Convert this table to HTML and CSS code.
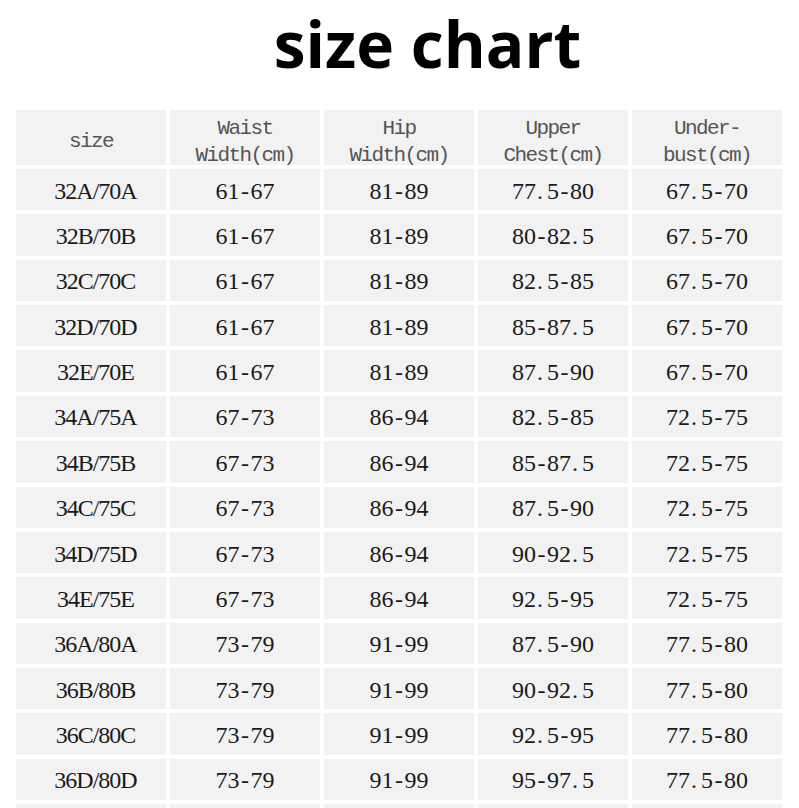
FILE: index.html
```html
<!DOCTYPE html>
<html>
<head>
<meta charset="utf-8">
<link rel="stylesheet" href="styles.css">
</head>
<body>
<div class="page">
  <h1 class="title">size chart</h1>
  <div class="chart">
    <div class="cell head">size</div>
    <div class="cell head">Waist<br>Width(cm)</div>
    <div class="cell head">Hip<br>Width(cm)</div>
    <div class="cell head">Upper<br>Chest(cm)</div>
    <div class="cell head">Under-<br>bust(cm)</div>

    <div class="cell size">32A/70A</div><div class="cell">61<span class="dash">-</span>67</div><div class="cell">81<span class="dash">-</span>89</div><div class="cell">77<span class="dot">.</span>5<span class="dash">-</span>80</div><div class="cell">67<span class="dot">.</span>5<span class="dash">-</span>70</div>
    <div class="cell size">32B/70B</div><div class="cell">61<span class="dash">-</span>67</div><div class="cell">81<span class="dash">-</span>89</div><div class="cell">80<span class="dash">-</span>82<span class="dot">.</span>5</div><div class="cell">67<span class="dot">.</span>5<span class="dash">-</span>70</div>
    <div class="cell size">32C/70C</div><div class="cell">61<span class="dash">-</span>67</div><div class="cell">81<span class="dash">-</span>89</div><div class="cell">82<span class="dot">.</span>5<span class="dash">-</span>85</div><div class="cell">67<span class="dot">.</span>5<span class="dash">-</span>70</div>
    <div class="cell size">32D/70D</div><div class="cell">61<span class="dash">-</span>67</div><div class="cell">81<span class="dash">-</span>89</div><div class="cell">85<span class="dash">-</span>87<span class="dot">.</span>5</div><div class="cell">67<span class="dot">.</span>5<span class="dash">-</span>70</div>
    <div class="cell size">32E/70E</div><div class="cell">61<span class="dash">-</span>67</div><div class="cell">81<span class="dash">-</span>89</div><div class="cell">87<span class="dot">.</span>5<span class="dash">-</span>90</div><div class="cell">67<span class="dot">.</span>5<span class="dash">-</span>70</div>
    <div class="cell size">34A/75A</div><div class="cell">67<span class="dash">-</span>73</div><div class="cell">86<span class="dash">-</span>94</div><div class="cell">82<span class="dot">.</span>5<span class="dash">-</span>85</div><div class="cell">72<span class="dot">.</span>5<span class="dash">-</span>75</div>
    <div class="cell size">34B/75B</div><div class="cell">67<span class="dash">-</span>73</div><div class="cell">86<span class="dash">-</span>94</div><div class="cell">85<span class="dash">-</span>87<span class="dot">.</span>5</div><div class="cell">72<span class="dot">.</span>5<span class="dash">-</span>75</div>
    <div class="cell size">34C/75C</div><div class="cell">67<span class="dash">-</span>73</div><div class="cell">86<span class="dash">-</span>94</div><div class="cell">87<span class="dot">.</span>5<span class="dash">-</span>90</div><div class="cell">72<span class="dot">.</span>5<span class="dash">-</span>75</div>
    <div class="cell size">34D/75D</div><div class="cell">67<span class="dash">-</span>73</div><div class="cell">86<span class="dash">-</span>94</div><div class="cell">90<span class="dash">-</span>92<span class="dot">.</span>5</div><div class="cell">72<span class="dot">.</span>5<span class="dash">-</span>75</div>
    <div class="cell size">34E/75E</div><div class="cell">67<span class="dash">-</span>73</div><div class="cell">86<span class="dash">-</span>94</div><div class="cell">92<span class="dot">.</span>5<span class="dash">-</span>95</div><div class="cell">72<span class="dot">.</span>5<span class="dash">-</span>75</div>
    <div class="cell size">36A/80A</div><div class="cell">73<span class="dash">-</span>79</div><div class="cell">91<span class="dash">-</span>99</div><div class="cell">87<span class="dot">.</span>5<span class="dash">-</span>90</div><div class="cell">77<span class="dot">.</span>5<span class="dash">-</span>80</div>
    <div class="cell size">36B/80B</div><div class="cell">73<span class="dash">-</span>79</div><div class="cell">91<span class="dash">-</span>99</div><div class="cell">90<span class="dash">-</span>92<span class="dot">.</span>5</div><div class="cell">77<span class="dot">.</span>5<span class="dash">-</span>80</div>
    <div class="cell size">36C/80C</div><div class="cell">73<span class="dash">-</span>79</div><div class="cell">91<span class="dash">-</span>99</div><div class="cell">92<span class="dot">.</span>5<span class="dash">-</span>95</div><div class="cell">77<span class="dot">.</span>5<span class="dash">-</span>80</div>
    <div class="cell size">36D/80D</div><div class="cell">73<span class="dash">-</span>79</div><div class="cell">91<span class="dash">-</span>99</div><div class="cell">95<span class="dash">-</span>97<span class="dot">.</span>5</div><div class="cell">77<span class="dot">.</span>5<span class="dash">-</span>80</div>
    <div class="cell"></div><div class="cell"></div><div class="cell"></div><div class="cell"></div><div class="cell"></div>
  </div>
</div>
</body>
</html>
```
FILE: styles.css
```css
html, body {
  margin: 0;
  padding: 0;
  background: #ffffff;
  height: 808px;
  overflow: hidden;
}

.page {
  width: 799px;
}

.title {
  margin: 0;
  padding-left: 56px;
  text-align: center;
  font-family: "Open Sans", "Noto Sans", sans-serif;
  font-weight: 700;
  font-size: 64px;
  line-height: normal;
  color: #000000;
}

.chart {
  margin-top: 23px;
  margin-left: 16px;
  display: grid;
  grid-template-columns: repeat(5, 150px);
  grid-template-rows: 55px;
  grid-auto-rows: 41.36px;
  column-gap: 4px;
  row-gap: 4px;
}

.cell {
  background: #f2f2f2;
  display: flex;
  align-items: center;
  justify-content: center;
  text-align: center;
  font-family: "Liberation Serif", serif;
  font-size: 24px;
  color: #1a1a1a;
  padding-top: 3px;
  box-sizing: border-box;
  white-space: nowrap;
}

.head {
  font-family: "Liberation Mono", monospace;
  font-size: 21px;
  letter-spacing: -1.6px;
  line-height: 27px;
  color: #555555;
  padding-top: 8px;
  flex-direction: column;
}

.size {
  padding-left: 9px;
  letter-spacing: -1px;
}

.dot {
  display: inline-block;
  width: 11px;
  text-align: left;
  padding-left: 1px;
  box-sizing: border-box;
}

.dash {
  display: inline-block;
  width: 11px;
  text-align: center;
}
```
